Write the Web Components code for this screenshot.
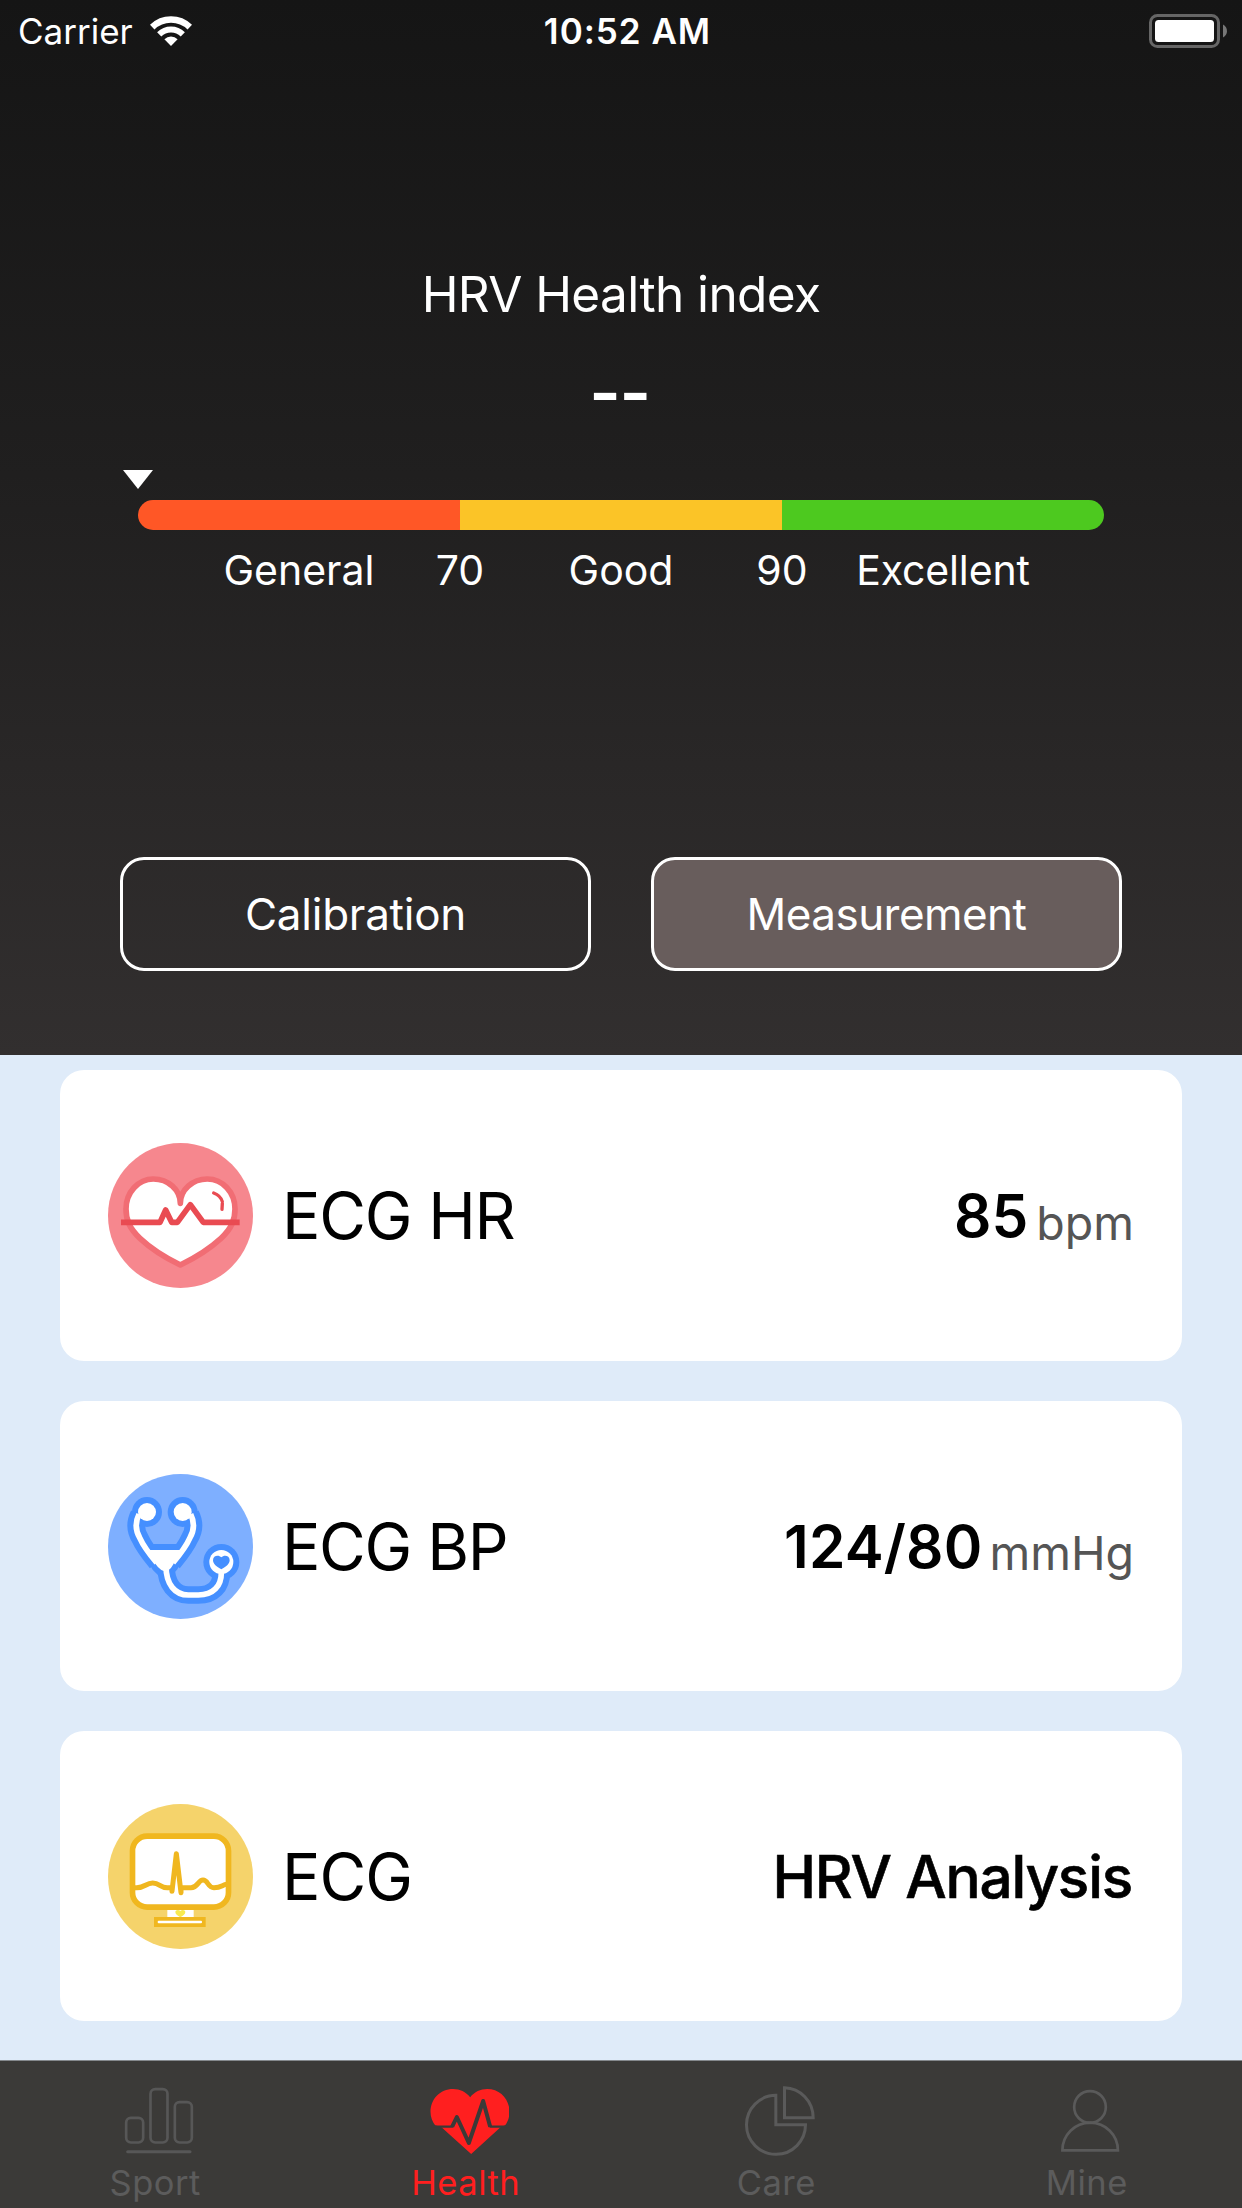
<!DOCTYPE html>
<html lang="en">
<head>
<meta charset="utf-8">
<title>Health</title>
<style>
body{margin:0;background:#dfebf9;font-family:Inter,"Liberation Sans",sans-serif}
</style>
</head>
<body>
<health-app></health-app>
<script>
const define = (name, html) => {
  const t = document.createElement('template');
  t.innerHTML = html;
  customElements.define(name, class extends HTMLElement {
    constructor() {
      super();
      this.attachShadow({ mode: 'open' }).append(t.content.cloneNode(true));
    }
  });
};

define('status-bar', `
<style>
:host{display:grid;grid-template-columns:1fr auto 1fr;align-items:center;height:62px;color:#fff;font-size:35px;line-height:62px;white-space:nowrap}
.left{display:flex;align-items:center;padding-left:18px}
.wifi{width:42px;height:30px;margin-left:17px}
.time{font-weight:600;letter-spacing:.980px;padding-left:13px}
.battery{justify-self:end;margin-right:14px;width:80px;height:36px}
</style>
<div class="left"><span class="carrier">Carrier</span>
<svg class="wifi" viewBox="0 0 42 30" fill="none" stroke="#fff"><path stroke-width="6.5" d="M2.2 11.1A27 27 0 0 1 39.8 11.1"/><path stroke-width="6" d="M9.2 18.3A17 17 0 0 1 32.8 18.3"/><path stroke="none" fill="#fff" d="M21 30L14.4 23.2A9.5 9.5 0 0 1 27.6 23.2Z"/></svg></div>
<span class="time">10:52 AM</span>
<svg class="battery" viewBox="1148 12 80 36"><rect x="1150.5" y="14.5" width="68" height="31" rx="7" fill="none" stroke="#666" stroke-width="3"/><rect x="1155" y="19" width="59" height="22" rx="3.5" fill="#fff"/><path d="M1223 23.5C1228.300 26 1228.300 34 1223 36.500Z" fill="#777"/></svg>
`);

define('index-scale', `
<style>
:host{display:block;width:966px;color:#fff;font-size:41px}
.marker{display:block;width:30px;height:19px;margin-left:-15px}
.bar{display:flex;height:30px;border-radius:15px;overflow:hidden;margin-top:11px}
.bar i{flex:1}
.labels{display:grid;grid-template-columns:repeat(6,161px);margin-top:15px;line-height:50px}
.labels span{text-align:center;white-space:nowrap;grid-row:1}
</style>
<svg class="marker" viewBox="0 0 30 19"><path d="M0 0H30L15 19Z" fill="#fff"/></svg>
<div class="bar"><i style="background:#ff5726"></i><i style="background:#fbc427"></i><i style="background:#4dc91f"></i></div>
<div class="labels">
<span style="grid-column:1/3">General</span><span style="grid-column:2/4">70</span><span style="grid-column:3/5">Good</span><span style="grid-column:4/6;letter-spacing:.200px">90</span><span style="grid-column:5/7;letter-spacing:-.150px">Excellent</span>
</div>
`);

define('pill-button', `
<style>
:host{display:block;box-sizing:border-box;width:471px;height:114px;border:3px solid #fff;border-radius:24px;color:#fff;font-size:44px;line-height:108px;text-align:center;letter-spacing:var(--track,-.250px);background:var(--fill,transparent)}
</style><slot></slot>
`);

define('hero-panel', `
<style>
:host{display:flex;flex-direction:column;align-items:center;height:1055px;background:linear-gradient(#151515,#201f1f 45%,#322f2f)}
status-bar{align-self:stretch}
h1{margin:202px 0 0;font-weight:400;font-size:49.500px;line-height:60px;color:#fff;letter-spacing:-.600px}
.score{font-size:68px;font-weight:600;line-height:60px;letter-spacing:-1.500px;color:#fff;margin:38px 3px 0 0}
index-scale{margin-top:48px}
.actions{display:flex;gap:60px;margin-top:262px}
</style>
<status-bar></status-bar>
<h1>HRV Health index</h1>
<div class="score">--</div>
<index-scale></index-scale>
<div class="actions"><pill-button>Calibration</pill-button><pill-button style="--fill:#685d5c;--track:-.550px">Measurement</pill-button></div>
`);

define('metric-card', `
<style>
:host{display:flex;align-items:center;box-sizing:border-box;height:290px;padding:0 48px 0 48px;border-radius:24px;background:#fff;color:#000;white-space:nowrap}
::slotted(svg){display:block;width:145px;height:145px}
.name{margin-left:29px;font-size:64px;letter-spacing:var(--name-track,-1.400px);flex:1}
.value{font-size:58.500px;font-weight:600}
.unit{font-size:46.500px;color:#555;padding-top:14px}
</style>
<slot name="icon"></slot><span class="name"><slot name="name"></slot></span><span class="value"><slot name="value"></slot></span><span class="unit"><slot name="unit"></slot></span>
`);

define('tab-item', `
<style>
:host{display:flex;flex-direction:column;align-items:center;flex:1;color:#5c5c5c;font-size:34.500px;letter-spacing:.500px}
::slotted(svg){display:block;width:80px;height:80px;margin:21px 0 0 7px}
.label{line-height:42px}
:host([active]){color:#ff1f1f}
</style>
<slot name="icon"></slot><span class="label"><slot></slot></span>
`);

define('tab-bar', `
<style>
:host{display:flex;box-sizing:border-box;height:148px;border-top:1px solid #85898d;background:#3b3a38}
</style><slot></slot>
`);

define('health-app', `
<style>
:host{display:block;width:1242px;height:2208px;overflow:hidden;background:#dfebf9}
.cards{display:flex;flex-direction:column;gap:40px;padding:15px 60px 39px}
.cards metric-card:first-child{height:291px}
</style>
<hero-panel></hero-panel>
<div class="cards">
<metric-card style="--name-track:-1.200px">
<svg slot="icon" viewBox="54 69 435 435"><circle cx="271.500" cy="286.500" r="217.500" fill="#f6878e"/>
<path d="M271 250C271 210 235 177 190 177C145 177 108 217 108 267C108 300 118 325 150 355C185 388 230 415 271 435C312 415 357 388 393 355C425 325 435 300 435 267C435 217 398 177 352 177C307 177 271 210 271 250Z" fill="#fff" stroke="#f16d74" stroke-width="17" stroke-linejoin="round"/>
<path d="M93 307H210L227 270L245 307H262L301 254L340 307H449" fill="none" stroke="#e94b52" stroke-width="17" stroke-linejoin="round"/>
<path d="M371 219Q392 227 397 245M397 250L396 268" fill="none" stroke="#e94b52" stroke-width="10" stroke-linecap="round"/></svg>
<span slot="name">ECG HR</span><span slot="value">85</span><span slot="unit" style="margin-left:8px">bpm</span>
</metric-card>
<metric-card>
<svg slot="icon" viewBox="54 69 435 435"><circle cx="271.500" cy="286.500" r="217.500" fill="#7eafff"/>
<g fill="none" stroke="#458fff" stroke-width="53" stroke-linejoin="round"><circle cx="171" cy="183" r="45" fill="#458fff" stroke="none"/><circle cx="278" cy="183" r="45" fill="#458fff" stroke="none"/><circle cx="394" cy="333" r="54" fill="#458fff" stroke="none"/>
<path d="M147 190C132 220 140 245 150 262C160 285 175 305 200 335M302 190C317 220 309 245 299 262C289 285 274 305 249 335M228 345C228 400 255 432 295 432H325C370 432 394 405 394 365"/><path d="M176 297H272L247 345L235 358H215L202 345Z" fill="#458fff" stroke-width="36"/></g>
<g fill="none" stroke="#fff" stroke-width="17"><circle cx="171" cy="183" r="27" fill="#fff" stroke="none"/><circle cx="278" cy="183" r="27" fill="#fff" stroke="none"/><circle cx="394" cy="333" r="36" fill="#fff" stroke="none"/>
<path d="M147 190C132 220 140 245 150 262C160 285 175 305 200 335M302 190C317 220 309 245 299 262C289 285 274 305 249 335M228 345C228 400 255 432 295 432H325C370 432 394 405 394 365"/><path d="M176 297H272L250 340Q244 352 236 357Q225 364 214 357Q204 350 196 338Z" fill="#fff" stroke="none"/></g>
<path d="M394 355C380 347 369 339 369 328C369 313 386 311 394 319C402 311 419 313 419 328C419 339 408 347 394 355Z" fill="#458fff"/></svg>
<span slot="name">ECG BP</span><span slot="value" style="letter-spacing:.150px">124/80</span><span slot="unit" style="margin-left:7px">mmHg</span>
</metric-card>
<metric-card style="--name-track:-1px">
<svg slot="icon" viewBox="54 72 435 435"><circle cx="271.500" cy="289.500" r="217.500" fill="#f5d36b"/>
<rect x="232" y="385" width="79" height="28" fill="#fff"/><path d="M271 412C262 406 256 402 256 396C256 389 267 388 271 393C275 388 286 389 286 396C286 402 280 406 271 412Z" fill="#f8ea50"/>
<rect x="127.500" y="168.500" width="288" height="213" rx="44" fill="#fff" stroke="#f0b71f" stroke-width="17"/>
<g fill="none" stroke="#f0b71f" stroke-width="15" stroke-linecap="round" stroke-linejoin="round"><path d="M135 323C164 326 166 309 188 309C210 309 209 323 232 323H246V334L259 221L273 338V323H303C324 323 324 300 339 300C355 300 352 323 372 323C395 323 397 314 410 313"/></g>
<rect x="192" y="411" width="155" height="30" fill="#f0b71f"/><rect x="203" y="422" width="133" height="8" rx="3" fill="#fff"/></svg>
<span slot="name">ECG</span><span slot="value" style="font-weight:500;letter-spacing:-1.200px;-webkit-text-stroke:.600px #000;margin-right:2px">HRV Analysis</span>
</metric-card>
</div>
<tab-bar>
<tab-item><svg slot="icon" viewBox="86 126 240 240" fill="none" stroke="#575757" stroke-width="8"><rect x="107.500" y="233.500" width="51" height="74" rx="14"/><rect x="180.500" y="147.500" width="51" height="160" rx="14"/><rect x="253.500" y="186.500" width="51" height="121" rx="14"/><path d="M112 335H299" stroke-width="9" stroke-linecap="round"/></svg>Sport</tab-item>
<tab-item active><svg slot="icon" viewBox="1017.500 126 240 240"><path d="M1141 172C1128 155 1110 147 1090 147C1050 147 1022 178 1022 215C1022 232 1028 245 1036 256L1055 262L1144 342L1232 262L1246 256C1254 245 1259 232 1259 215C1259 178 1231 147 1192 147C1172 147 1154 155 1141 172Z" fill="#ff1f1f"/><g fill="none" stroke="#3b3a38" stroke-linejoin="round"><path stroke-width="7" d="M1024 260H1090M1199 260H1258"/><path stroke-width="12" d="M1087 260L1101 231L1137 309L1180 183L1201 260"/></g></svg>Health</tab-item>
<tab-item><svg slot="icon" viewBox="119.500 126 240 240" fill="none" stroke="#5a5a5a" stroke-width="9"><path d="M227 166A88.500 88.500 0 1 0 316 254H227Z"/><path d="M253 143A88 90 0 0 1 339 233H253Z"/></svg>Care</tab-item>
<tab-item><svg slot="icon" viewBox="1050.800 126 240 240" fill="none" stroke="#5a5a5a" stroke-width="8"><circle cx="1170.800" cy="201" r="47.500"/><path d="M1088 331A83 83 0 0 1 1254.500 331Z"/></svg>Mine</tab-item>
</tab-bar>
`);
</script>
</body>
</html>
